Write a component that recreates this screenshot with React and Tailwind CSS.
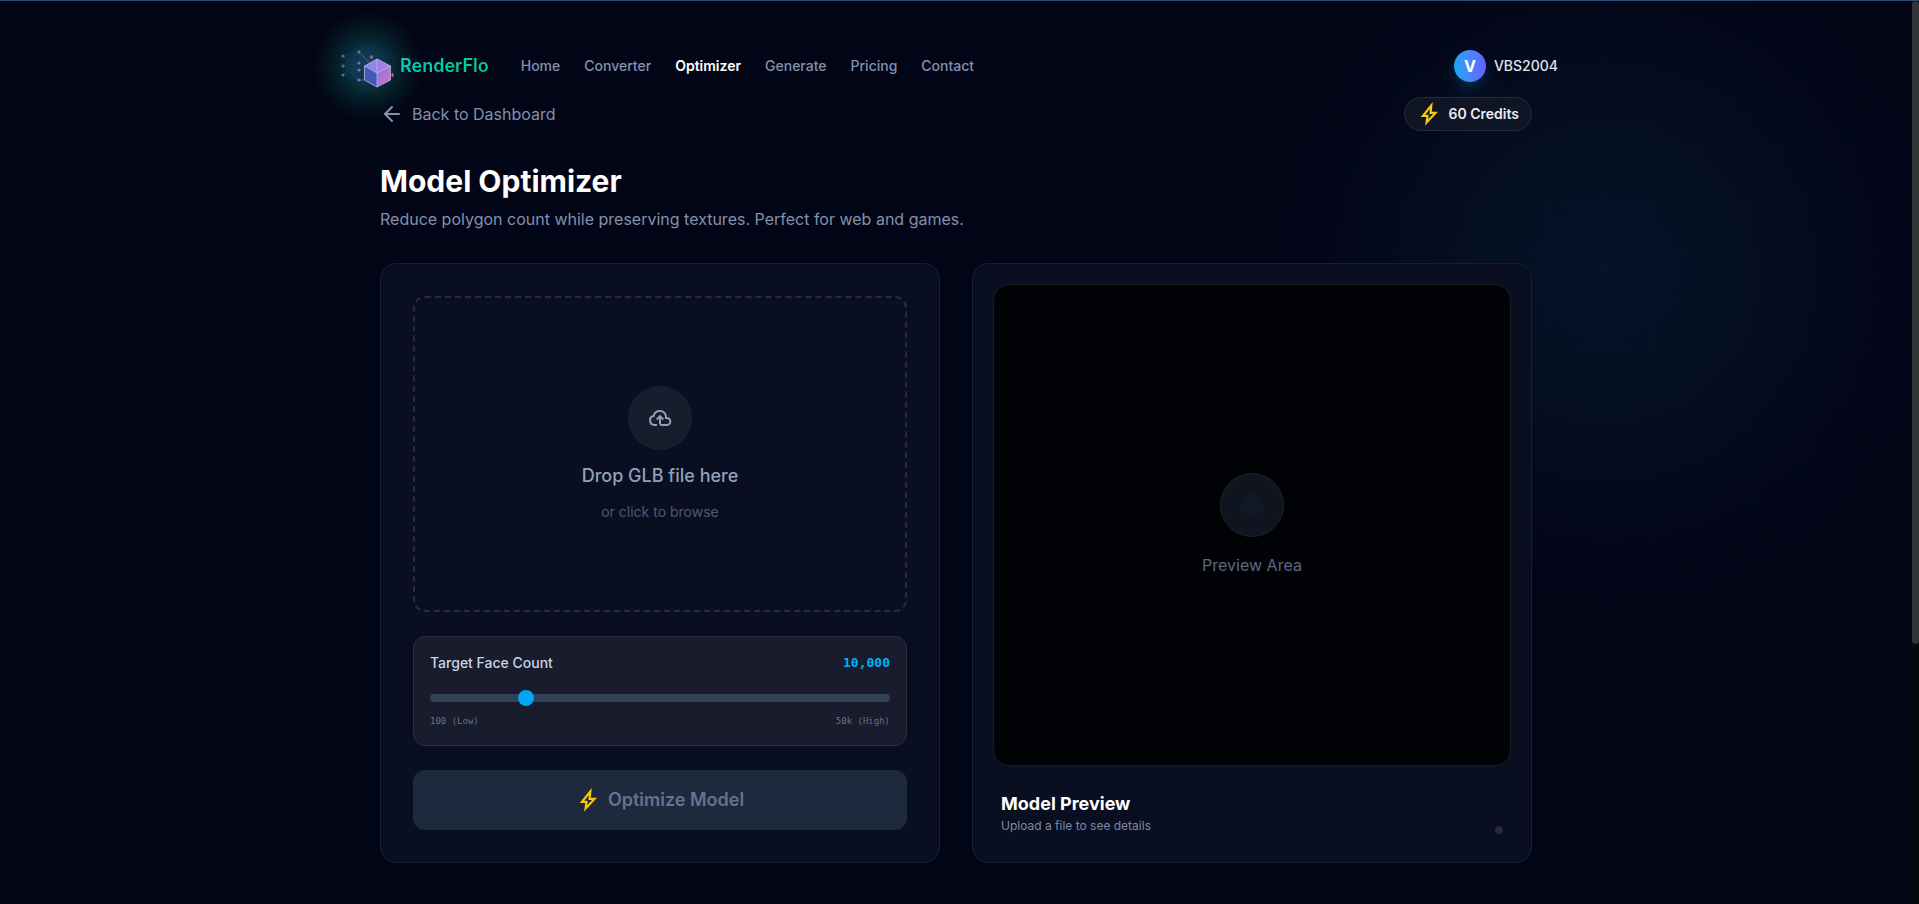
import { useState } from 'react';
import { ArrowLeft } from 'lucide-react';

const navLinks = ['Home', 'Converter', 'Optimizer', 'Generate', 'Pricing', 'Contact'];

function Bolt() {
    return (
        <svg viewBox="0 0 24 24" className="w-6 h-6 text-[#fcc800]" fill="none" stroke="currentColor" strokeWidth="2.2" aria-hidden="true">
            <path d="M14.3 3.5 6 13.8h4.5l-.9 6.700 8.900-9.600h-4.900l.7-7.400Z" />
        </svg>
    );
}

function Logo() {
    const inputs = [[3, 12], [3, 22], [3, 31]];
    const hidden = [[19, 8], [19, 19], [19, 26], [19, 36]];
    return (
        <svg viewBox="0 0 56 44" className="relative w-14 h-11" fill="none" aria-hidden="true">
            <defs>
                <linearGradient id="cube-top" x1="0" y1="0" x2="1" y2="0">
                    <stop offset="0" stopColor="#8286ee" />
                    <stop offset="1" stopColor="#ad7de6" />
                </linearGradient>
                <linearGradient id="cube-right" x1="0" y1="0" x2="1" y2="1">
                    <stop offset="0" stopColor="#7c7cf0" />
                    <stop offset="1" stopColor="#d96fb5" />
                </linearGradient>
            </defs>
            {inputs.map(([x, y]) =>
                hidden.map(([hx, hy]) => (
                    <path key={`${y}-${hy}`} d={`M${x} ${y}L${hx} ${hy}`} stroke="#4b6fb5" strokeOpacity=".2" strokeWidth=".6" />
                ))
            )}
            <path d="M19 8 29 18M19 36h6" stroke="#8b7bd0" strokeDasharray="1.5 1.5" />
            {inputs.map(([x, y]) => <circle key={y} cx={x} cy={y} r="1.6" fill="#3c74a8" />)}
            {hidden.map(([x, y]) => <circle key={y} cx={x} cy={y} r="1.6" fill="#6f6fc4" />)}
            <path d="M37 15 24.500 22v14L37 43Z" fill="#4458b8" />
            <path d="M37 15 50.500 22v14L37 43Z" fill="url(#cube-right)" />
            <path d="M37 15 50.500 22 37 29 24.500 22Z" fill="url(#cube-top)" />
            <path d="M37 15 50.500 22v14L37 43 24.500 36V22ZM24.500 22 37 29l13.500-7M37 15v28" stroke="#b9b4ee" strokeOpacity=".8" strokeLinejoin="round" />
            <path d="M31.500 11v4M29.500 13h4M52.500 29v4M51 31h3" stroke="#d05c9c" strokeWidth="1.2" />
        </svg>
    );
}

function Header() {
    return (
        <header className="flex items-center justify-between">
            <div className="flex items-center">
                <a href="#" className="flex items-center gap-1">
                    <span className="relative">
                        <span className="absolute -inset-x-7 -inset-y-[34px] bg-[radial-gradient(closest-side,#17405e_0%,#0b3548_30%,#05222c_52%,#03101d_78%,transparent_100%)]" />
                        <Logo />
                    </span>
                    <span className="relative text-lg font-semibold bg-linear-to-r from-[#00d0bd] to-[#05cf85] bg-clip-text text-transparent">RenderFlo</span>
                </a>
                <nav className="ml-8 flex gap-6 text-sm font-medium text-[#8391ab]">
                    {navLinks.map((link) => (
                        <a key={link} href="#" className={link === 'Optimizer' ? 'font-semibold text-white' : ''}>{link}</a>
                    ))}
                </nav>
            </div>
            <button className="flex items-center gap-2 text-sm font-medium text-[#dfe5ee]">
                <span className="w-8 h-8 flex items-center justify-center rounded-full bg-linear-to-r from-[#00a6f4] to-[#615fff] text-base font-bold text-white shadow-lg shadow-sky-500/20">V</span>
                VBS2004
            </button>
        </header>
    );
}

function DropZone() {
    return (
        <button className="w-full h-[316px] flex flex-col items-center justify-center rounded-xl border-2 border-dashed border-[#272b3d]">
            <span className="w-16 h-16 mb-3 flex items-center justify-center rounded-full bg-[#181d2e]">
                <svg viewBox="0 0 24 24" className="w-6 h-6 text-[#90a1b9]" fill="none" stroke="currentColor" strokeWidth="2" aria-hidden="true">
                    <path d="M9 19H6.500a4.500 4.500 0 0 1-.9-8.900C6.300 6.700 8.900 5 12 5a6 6 0 0 1 6 6v1h.8a3.500 3.500 0 0 1 0 7H14a2 2 0 0 1-2-2v-6" />
                    <path d="m8.700 13.500 3.300-3.300 3.300 3.300" />
                </svg>
            </span>
            <span className="mb-2 text-lg font-medium text-[#90a1b9]">Drop GLB file here</span>
            <span className="mt-1 text-sm text-[#4d5b72]">or click to browse</span>
        </button>
    );
}

function FaceCount() {
    const [faces, setFaces] = useState(10000);
    return (
        <div className="h-[110px] p-4 rounded-xl border border-[#2b2f3d] bg-[#181c2d]">
            <div className="flex items-center justify-between">
                <label htmlFor="faces" className="text-sm font-medium text-[#cad5e2]">Target Face Count</label>
                <output htmlFor="faces" className="font-['DejaVu_Sans_Mono',monospace] text-[13px] font-bold text-[#00b0f5]">{faces.toLocaleString('en-US')}</output>
            </div>
            <input
                id="faces"
                type="range"
                min="100"
                max="50000"
                step="100"
                value={faces}
                onChange={(e) => setFaces(Number(e.target.value))}
                className="mt-[21px] block w-full h-2 appearance-none rounded-lg bg-[#314158] [&::-webkit-slider-thumb]:appearance-none [&::-webkit-slider-thumb]:w-4 [&::-webkit-slider-thumb]:h-4 [&::-webkit-slider-thumb]:rounded-full [&::-webkit-slider-thumb]:bg-[#00a6f4]"
            />
            <div className="mt-[11px] flex justify-between font-['DejaVu_Sans_Mono',monospace] text-[9px] leading-4 text-[#62748e]">
                <span>100 (Low)</span>
                <span>50k (High)</span>
            </div>
        </div>
    );
}

function Preview() {
    return (
        <section className="p-5 rounded-2xl border border-[#0e2136] bg-[#0a0f21]/90">
            <div className="h-[482px] flex flex-col items-center justify-center rounded-2xl border border-[#1b1c20] bg-[#010206]">
                <div className="w-16 h-16 flex items-center justify-center rounded-full border border-[#1d222d] bg-[#0f141f]">
                    <div className="w-6 h-6 rounded-full bg-[#0e1826]" />
                </div>
                <p className="mt-4 text-[#5a6981]">Preview Area</p>
            </div>
            <div className="pt-6 px-2 flex items-end justify-between">
                <div>
                    <h2 className="text-lg font-bold text-white">Model Preview</h2>
                    <p className="text-xs text-[#7c8ba3]">Upload a file to see details</p>
                </div>
                <span className="w-2 h-2 rounded-full bg-[#272b3c]" />
            </div>
        </section>
    );
}

export default function App() {
    return (
        <div className="flex min-h-screen border-t border-[#2e4a70] bg-[#020516] font-['Inter',sans-serif]">
            <div className="flex-1 bg-[linear-gradient(#38bdf803_1px,transparent_1px),linear-gradient(90deg,#38bdf803_1px,transparent_1px),radial-gradient(circle_340px_at_84%_270px,#07122b,#040f20_40%,#03081a_75%,#02051600)] bg-[size:50px_50px,50px_50px,auto]">
                <div className="max-w-[1232px] mx-auto pt-[43px] pr-3.5">
                    <Header />
                </div>
                <main className="max-w-6xl mx-auto">
                    <div className="mt-[9px] flex items-center justify-between">
                        <a href="#" className="relative flex items-center gap-2 text-[#8391ab]">
                            <ArrowLeft className="w-6 h-6" />
                            Back to Dashboard
                        </a>
                        <div className="h-[34px] px-3 flex items-center gap-2 rounded-full border border-[#262b3a] bg-[#101525] text-sm font-semibold text-[#e8ecf3]">
                            <Bolt />
                            60 Credits
                        </div>
                    </div>
                    <h1 className="mt-8 text-3xl font-bold text-white">Model Optimizer</h1>
                    <p className="mt-2 text-[#8391ab]">Reduce polygon count while preserving textures. Perfect for web and games.</p>
                    <div className="mt-8 grid grid-cols-2 gap-8">
                        <section className="p-8 flex flex-col gap-6 rounded-2xl border border-[#0e2136] bg-[#090e20]">
                            <DropZone />
                            <FaceCount />
                            <button className="h-[60px] flex items-center justify-center gap-2 rounded-xl bg-[#1d293d] text-lg font-semibold text-[#62748e]">
                                <Bolt />
                                Optimize Model
                            </button>
                        </section>
                        <Preview />
                    </div>
                </main>
            </div>
            <div className="w-[7px] bg-[#080808]">
                <div className="h-[643px] rounded-full bg-[#333333]" />
            </div>
        </div>
    );
}
